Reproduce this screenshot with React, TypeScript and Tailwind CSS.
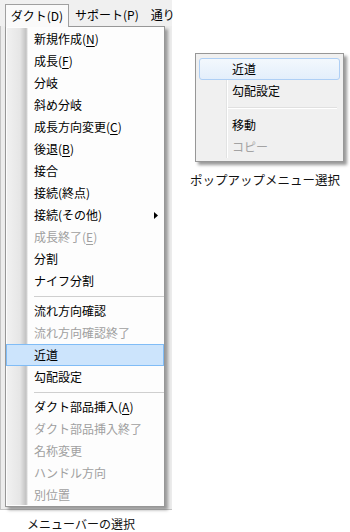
import React from 'react'

type Entry =
  | { t: string; k?: string; off?: boolean; sub?: boolean; on?: boolean }
  | 'sep'

const menu: Entry[] = [
  { t: '新規作成', k: 'N' },
  { t: '成長', k: 'F' },
  { t: '分岐' },
  { t: '斜め分岐' },
  { t: '成長方向変更', k: 'C' },
  { t: '後退', k: 'B' },
  { t: '接合' },
  { t: '接続(終点)' },
  { t: '接続(その他)', sub: true },
  { t: '成長終了', k: 'E', off: true },
  { t: '分割' },
  { t: 'ナイフ分割' },
  'sep',
  { t: '流れ方向確認' },
  { t: '流れ方向確認終了', off: true },
  { t: '近道', on: true },
  { t: '勾配設定' },
  'sep',
  { t: 'ダクト部品挿入', k: 'A' },
  { t: 'ダクト部品挿入終了', off: true },
  { t: '名称変更', off: true },
  { t: 'ハンドル方向', off: true },
  { t: '別位置', off: true },
]

const popup: Entry[] = [
  { t: '近道', on: true },
  { t: '勾配設定' },
  'sep',
  { t: '移動' },
  { t: 'コピー', off: true },
]

function Label({ e }: { e: { t: string; k?: string } }) {
  return (
    <span className="whitespace-nowrap">
      {e.t}
      {e.k && (
        <>
          (<span className="underline underline-offset-2">{e.k}</span>)
        </>
      )}
    </span>
  )
}

export default function App() {
  return (
    <div className="w-[350px] h-[532px] bg-white flex font-['Noto_Sans_CJK_JP','Noto_Sans',sans-serif] text-[12px] leading-none text-black">
      {/* メニューバー */}
      <div className="w-[172px] shrink-0 flex flex-col">
        <div className="h-[26px] bg-[#f0f0f0] flex items-end whitespace-nowrap">
          <div className="relative z-10 shrink-0 ml-[5px] -mb-px h-[23px] w-[64px] border border-b-0 border-[#a0a0a0] bg-[#fafafa] flex items-center justify-center pb-px">
            ダクト(D)
          </div>
          <div className="h-[22px] shrink-0 flex items-center ml-[6px]">サポート(P)</div>
          <div className="h-[22px] shrink-0 flex items-center ml-[12px]">通り</div>
        </div>

        <div className="h-[484px] bg-[#ededed] border-l border-b border-[#c4c4c4] flex pl-[4px]">
          <div className="w-[160px] h-[481px] border border-[#979797] bg-[#fdfdfd] shadow-[3px_3px_3px_rgba(0,0,0,0.35)] py-px">
            <div className="h-full bg-[linear-gradient(to_right,#fdfdfd_0px,#fdfdfd_1px,#f1f1f1_1px,#e6e6e6_14px,#c2c2c2_20px,#d8d8d8_21px,#fdfdfd_22px)]">
              {menu.map((e, i) =>
                e === 'sep' ? (
                  <div key={i} className="h-[8px] flex items-center pl-[28px]">
                    <div className="w-full h-px bg-[#cfcfcf]" />
                  </div>
                ) : (
                  <div
                    key={i}
                    className={`h-[22px] flex items-center justify-between pl-[27px] pr-[5px] border ${
                      e.on ? 'bg-[#cce4fc] border-[#80bcf6]' : 'border-transparent'
                    } ${e.off ? 'text-[#a0a0a0]' : 'text-black'}`}
                  >
                    <Label e={e} />
                    {e.sub && (
                      <svg width="4" height="7" viewBox="0 0 4 7">
                        <path d="M0 0 L4 3.5 L0 7 Z" fill="#000" />
                      </svg>
                    )}
                  </div>
                )
              )}
            </div>
          </div>
        </div>

        <p className="ml-[27px] mt-[6px] text-[12px] leading-[16px] text-[#111]">メニューバーの選択</p>
      </div>

      {/* ポップアップメニュー */}
      <div className="ml-[18px] flex flex-col">
        <div className="mt-[53px] ml-[5px] w-[149px] border border-[#979797] bg-[#f0f0f0] shadow-[3px_3px_3px_rgba(0,0,0,0.4)] pt-[4px] pb-[3px] px-[3px]">
          <div className="bg-[linear-gradient(to_right,transparent_27px,#e2e3e3_27px,#e2e3e3_28px,#ffffff_28px,#ffffff_29px,transparent_29px)]">
            {popup.map((e, i) =>
              e === 'sep' ? (
                <div key={i} className="h-[12px] flex flex-col justify-center pl-[29px] pr-[3px]">
                  <div className="h-px bg-[#e0e0e0]" />
                  <div className="h-px bg-white" />
                </div>
              ) : (
                <div
                  key={i}
                  className={`h-[22px] flex items-center pl-[32px] rounded-[3px] border ${
                    e.on
                      ? 'bg-[linear-gradient(to_bottom,#f3f8fd,#e3eefb)] border-[#aecff5]'
                      : 'border-transparent'
                  } ${e.off ? 'text-[#a3a3a3]' : 'text-black'}`}
                >
                  <Label e={e} />
                </div>
              )
            )}
          </div>
        </div>
        <p className="mt-[10px] text-[12.5px] leading-[16px] text-[#111]">ポップアップメニュー選択</p>
      </div>
    </div>
  )
}
